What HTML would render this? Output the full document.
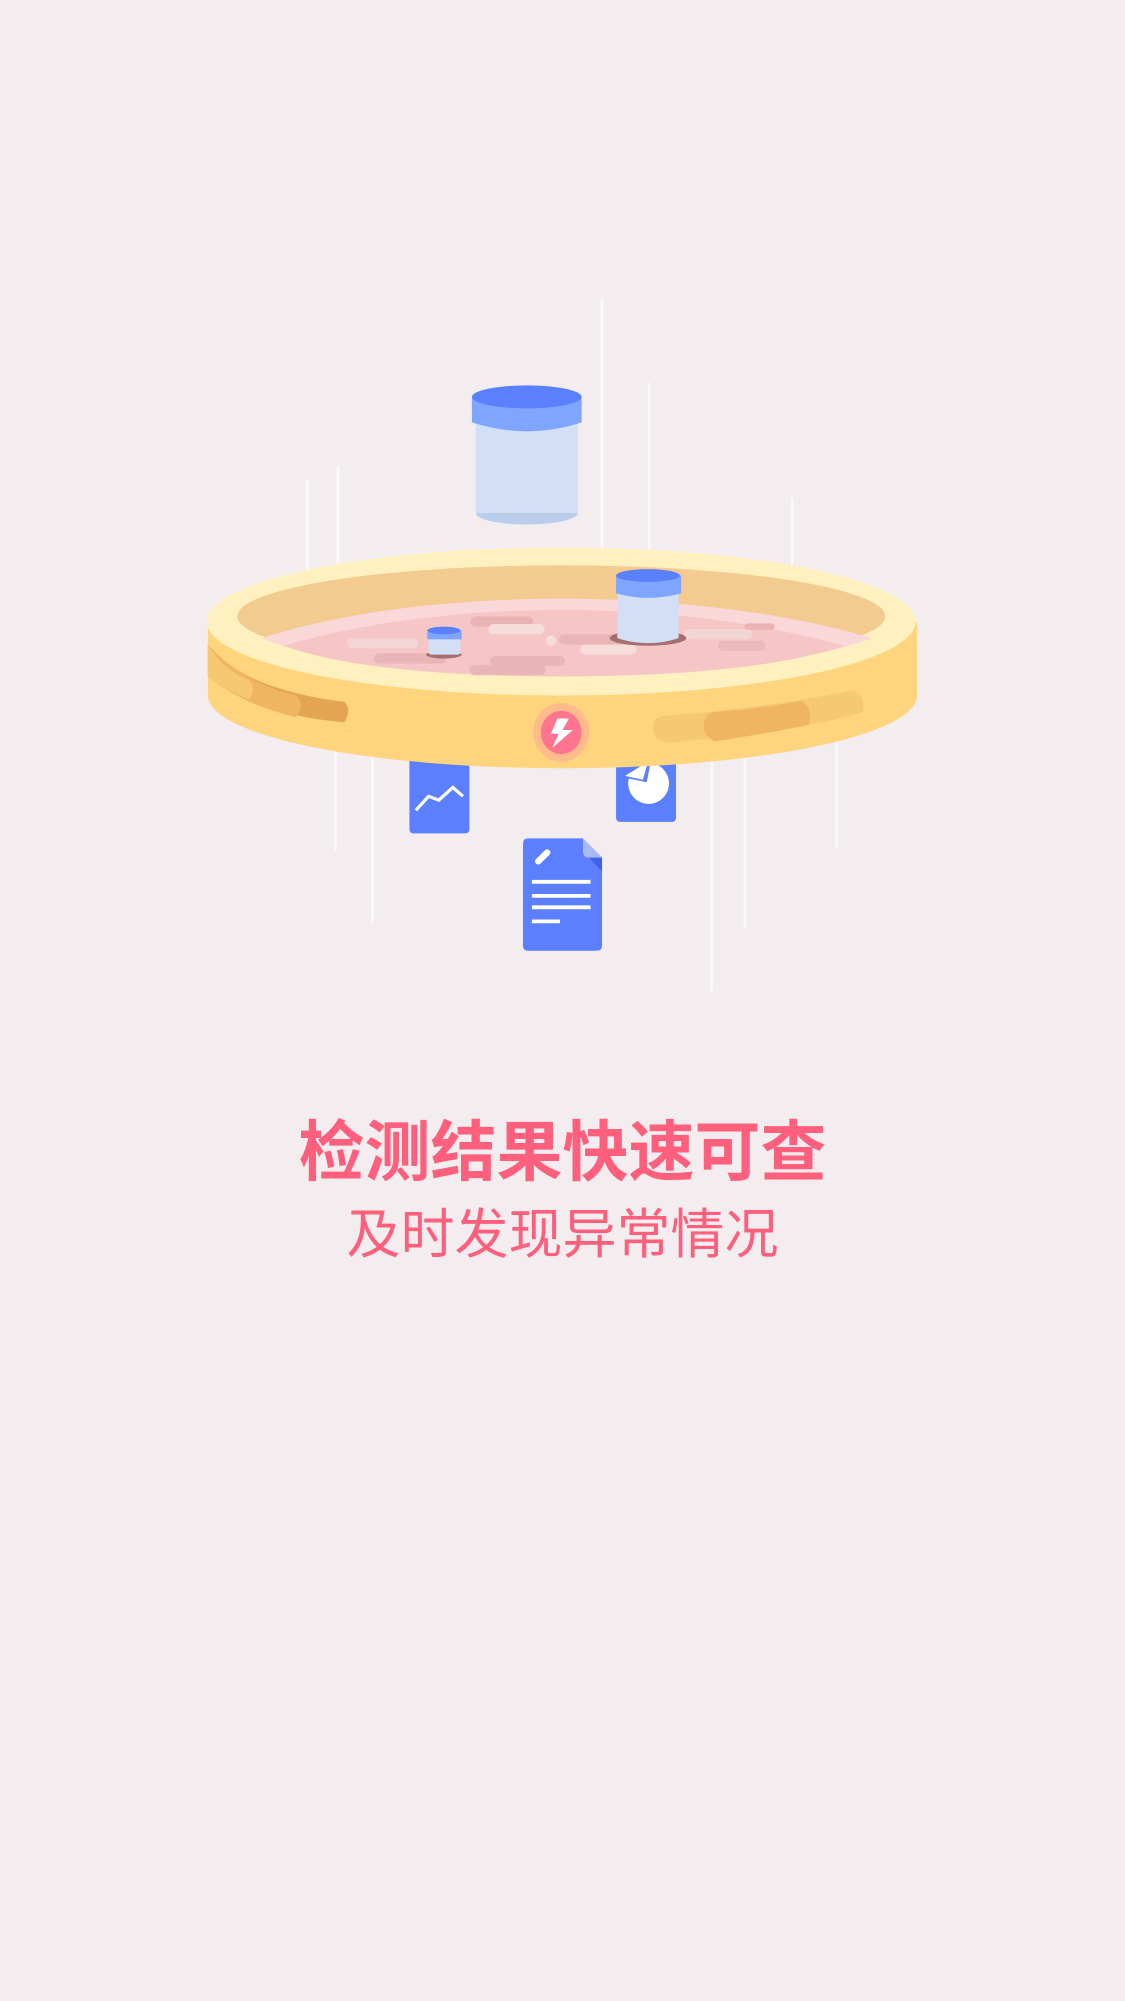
<!DOCTYPE html>
<html><head><meta charset="utf-8"><style>
html,body{margin:0;padding:0;background:#f3edf0;width:1125px;height:2001px;overflow:hidden;position:relative}
svg{position:absolute;left:0;top:0}
.t{position:absolute;left:0;width:1125px;text-align:center;color:#fd5f7c;font-family:"Liberation Sans","Noto Sans CJK SC",sans-serif;white-space:nowrap}
</style></head><body>
<svg width="1125" height="2001" viewBox="0 0 882 1568" preserveAspectRatio="none">
<g stroke="#fbf8f9" stroke-width="2.2">
<line x1="241" y1="376" x2="241" y2="500"/><line x1="265" y1="365" x2="265" y2="500"/>
<line x1="472" y1="233" x2="472" y2="460"/><line x1="509" y1="300" x2="509" y2="460"/>
<line x1="621" y1="390" x2="621" y2="470"/>
<line x1="263" y1="580" x2="263" y2="667"/><line x1="292" y1="580" x2="292" y2="724"/>
<line x1="558" y1="580" x2="558" y2="777"/><line x1="584" y1="580" x2="584" y2="727"/>
<line x1="656" y1="570" x2="656" y2="665"/>
</g>
<ellipse cx="413" cy="402" rx="40" ry="9" fill="#bacdea"/>
<rect x="373" y="330" width="80" height="72" fill="#d3dff5"/>
<path d="M370 311 H456 V331 Q413 345 370 331 Z" fill="#7fa6ff"/>
<ellipse cx="413" cy="311" rx="43" ry="9" fill="#5b80fe"/>
<rect x="321" y="575" width="47" height="78" rx="3" fill="#5b7fff"/>
<polyline points="326,635 336,624 344,627 355,617 363,624" fill="none" stroke="#fff" stroke-width="2.5"/>
<rect x="483" y="575" width="47" height="69" rx="3" fill="#5b7fff"/>
<path d="M510 598 A16 16 0 1 1 493 610 L507 613 Z" fill="#fff"/>
<path d="M490 608 L504 611 L508 597 Z" fill="#fff"/>
<path d="M163 487 V545 A278 57 0 0 0 719 545 V487 Z" fill="#ffd47e"/>
<path d="M163 505 Q190 540 270 550 Q276 556 270 566 Q200 560 163 530 Z" fill="#e4a552"/>
<path d="M163 505 Q190 535 232 545 Q240 552 232 562 Q190 552 163 530 Z" fill="#efb560"/>
<path d="M163 505 Q175 525 195 533 Q202 540 195 548 Q175 540 163 530 Z" fill="#f6c873"/>
<path d="M520 561 Q600 555 668 541 Q680 545 676 558 Q640 570 525 582 Q511 580 512 570 Q512 562 520 561Z" fill="#f6c873"/>
<path d="M560 558 Q600 555 628 549 Q638 555 634 568 Q600 575 560 581 Q550 575 552 566 Q553 559 560 558Z" fill="#efb560"/>
<ellipse cx="440" cy="574" rx="22" ry="23" fill="#ffbb8a"/>
<ellipse cx="440" cy="574" rx="16" ry="17" fill="#ff758f"/>
<path d="M437 563 H446 L441 572 H449 L433 586 L438 575 H432 Z" fill="#fff"/>
<ellipse cx="440" cy="487" rx="278" ry="58" fill="#fff1bf"/>
<ellipse cx="440" cy="483" rx="254" ry="40" fill="#f3ca90"/>
<path d="M205 500 Q300 470 440 469 Q580 470 684 500 Q600 530 440 530 Q280 530 205 500 Z" fill="#fad8da"/>
<path d="M222 506 Q320 478 440 478 Q560 478 662 506 Q590 530 440 530 Q290 530 222 506Z" fill="#f6c6c7"/>
<g stroke-linecap="round" stroke-width="8">
<line x1="373" y1="487" x2="414" y2="487" stroke="#eab4b4"/>
<line x1="387" y1="493" x2="423" y2="493" stroke="#f6dcdb"/>
<line x1="276" y1="504" x2="324" y2="504" stroke="#f4d5d5"/>
<line x1="297" y1="516" x2="346" y2="516" stroke="#e9b5b6"/>
<line x1="388" y1="518" x2="439" y2="518" stroke="#e9b5b6"/>
<line x1="372" y1="525" x2="424" y2="525" stroke="#e9b5b6"/>
<line x1="442" y1="501" x2="490" y2="501" stroke="#e9b5b6"/>
<line x1="459" y1="509" x2="495" y2="509" stroke="#f6dcdb"/>
<line x1="540" y1="497" x2="586" y2="497" stroke="#f4d5d5"/>
<line x1="567" y1="506" x2="596" y2="506" stroke="#eab9ba"/>
<line x1="586" y1="491" x2="605" y2="491" stroke="#eab4b4" stroke-width="5"/>
<circle cx="432" cy="502" r="4" fill="#f6dcdb" stroke="none"/>
</g>
<ellipse cx="348" cy="513" rx="14" ry="3" fill="#a56f72"/>
<rect x="336" y="499" width="25" height="14" rx="2" fill="#d3dff5"/>
<rect x="335" y="494" width="27" height="7" fill="#7fa6ff"/>
<ellipse cx="348" cy="494" rx="13" ry="3" fill="#5b80fe"/>
<ellipse cx="508" cy="500" rx="30" ry="6" fill="#a56f72"/>
<path d="M484 464 V500 Q508 508 532 500 V464 Z" fill="#d3dff5"/>
<path d="M483 451 H534 V465 Q508 472 483 465 Z" fill="#7fa6ff"/>
<ellipse cx="508" cy="451" rx="25" ry="5" fill="#5b80fe"/>
<path d="M414 657 H457 L472 672 V741 Q472 745 468 745 H414 Q410 745 410 741 V661 Q410 657 414 657Z" fill="#5b7fff"/>
<path d="M457 657 L472 672 H462 Q457 672 457 667 Z" fill="#a8b9f3"/>
<path d="M462 672 H472 V683 Z" fill="#3d64e8"/>
<g stroke="#fff" stroke-width="3"><line x1="417" y1="691" x2="463" y2="691"/><line x1="417" y1="702" x2="463" y2="702"/><line x1="417" y1="711" x2="463" y2="711"/><line x1="417" y1="722" x2="439" y2="722"/></g>
<line x1="422" y1="675" x2="429" y2="668" stroke="#fff" stroke-width="5" stroke-linecap="round"/>
</svg>
<div class="t" style="top:1112px;font-size:66px;font-weight:bold;line-height:80px">检测结果快速可查</div>
<div class="t" style="top:1200px;font-size:54px;line-height:70px">及时发现异常情况</div>
</body></html>
